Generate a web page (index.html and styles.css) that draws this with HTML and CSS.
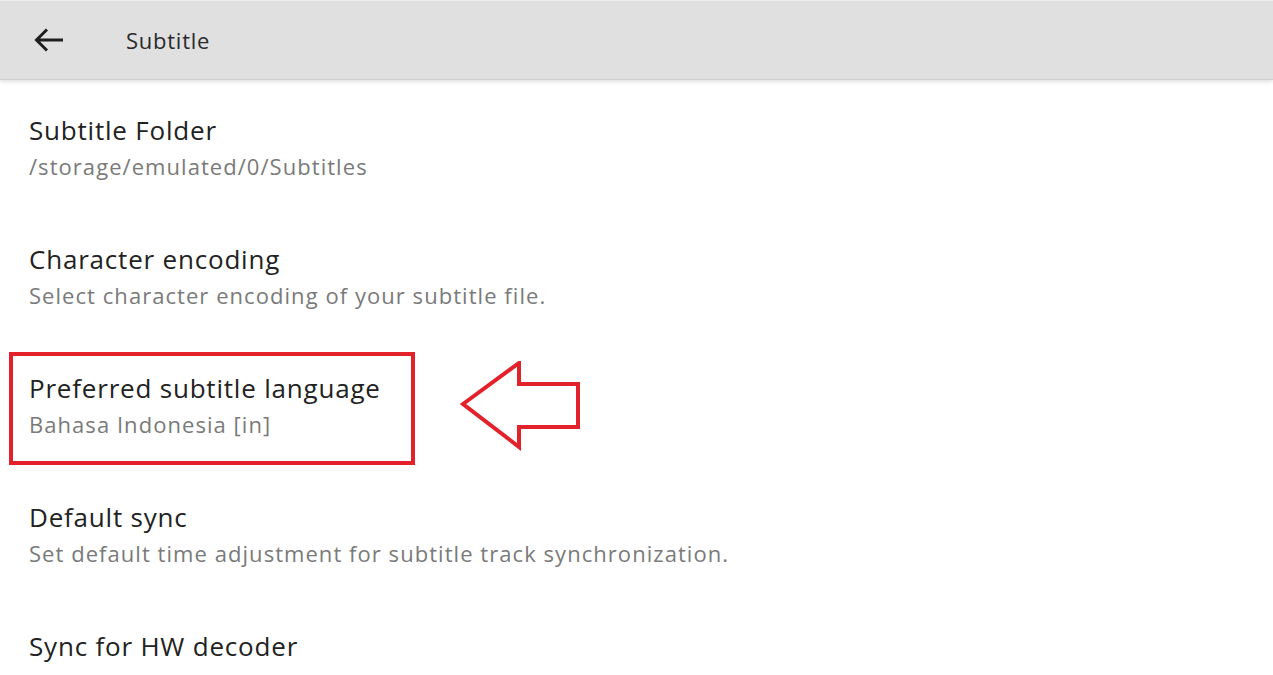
FILE: index.html
```html
<!DOCTYPE html>
<html lang="en">
<head>
<meta charset="utf-8">
<title>Subtitle</title>
<link rel="stylesheet" href="styles.css">
</head>
<body>
<header class="appbar">
  <svg class="back" width="30" height="26" viewBox="0 0 30 26" aria-hidden="true">
    <path d="M29 13H3M13 2.5L2.5 13L13 23.5" fill="none" stroke="#1f1f1f" stroke-width="3" stroke-linecap="butt" stroke-linejoin="miter"/>
  </svg>
  <h1 class="title">Subtitle</h1>
</header>
<main class="list">
  <div class="item">
    <div class="item-title">Subtitle Folder</div>
    <div class="item-sub">/storage/emulated/0/Subtitles</div>
  </div>
  <div class="item">
    <div class="item-title">Character encoding</div>
    <div class="item-sub">Select character encoding of your subtitle file.</div>
  </div>
  <div class="item highlighted">
    <div class="item-title">Preferred subtitle language</div>
    <div class="item-sub">Bahasa Indonesia [in]</div>
    <span class="mark-box"></span>
    <svg class="mark-arrow" width="124" height="90" viewBox="0 0 124 90" aria-hidden="true">
      <path d="M3 43L59 2V23H118V66H59V86Z" fill="none" stroke="#e3212b" stroke-width="4" stroke-linejoin="miter"/>
    </svg>
  </div>
  <div class="item">
    <div class="item-title">Default sync</div>
    <div class="item-sub">Set default time adjustment for subtitle track synchronization.</div>
  </div>
  <div class="item">
    <div class="item-title">Sync for HW decoder</div>
    <div class="item-sub">Adjust subtitle synchronization for hardware decoder.</div>
  </div>
</main>
</body>
</html>
```

FILE: styles.css
```css
html, body {
  margin: 0;
  padding: 0;
  background: #ffffff;
  overflow: hidden;
}
body {
  font-family: "Open Sans", "Noto Sans", sans-serif;
  color: #212121;
  height: 675px;
}
.appbar {
  height: 80px;
  background: #e0e0e0;
  border-top: 1px solid #ececec;
  border-bottom: 1px solid #cfcfcf;
  box-shadow: 0 2px 4px rgba(0,0,0,0.12);
  display: flex;
  align-items: center;
  padding-left: 34px;
  box-sizing: border-box;
  position: relative;
  z-index: 1;
}
.back {
  display: block;
}
.title {
  margin: 0 0 0 62px;
  font-size: 22px;
  font-weight: 400;
  color: #2a2a2a;
  letter-spacing: 0.75px;
}
.list {
  display: flex;
  flex-direction: column;
}
.item {
  position: relative;
  height: 129px;
  box-sizing: border-box;
  padding: 35px 0 0 29px;
}
.item-title {
  font-size: 26px;
  line-height: 30px;
  color: #222222;
  letter-spacing: 0.8px;
}
.item-sub {
  font-size: 22px;
  line-height: 42px;
  color: #7a7a7a;
  letter-spacing: 1.05px;
}
.mark-box {
  position: absolute;
  left: 9px;
  top: 14px;
  width: 406px;
  height: 113px;
  border: 4px solid #e3212b;
  box-sizing: border-box;
}
.mark-arrow {
  position: absolute;
  left: 460px;
  top: 23px;
}
```
